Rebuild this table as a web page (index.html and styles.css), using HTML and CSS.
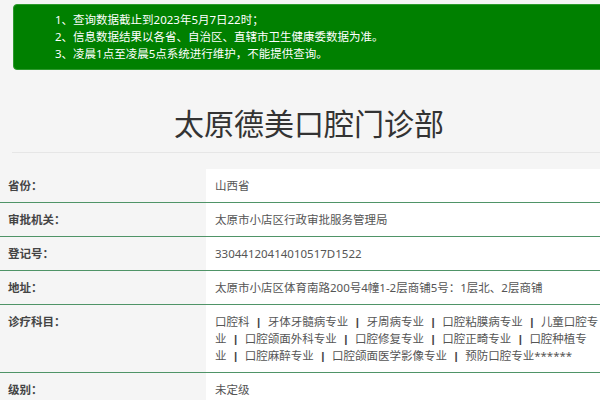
FILE: index.html
```html
<!DOCTYPE html>
<html lang="zh-CN">
<head>
<meta charset="utf-8">
<title>太原德美口腔门诊部</title>
<link rel="stylesheet" href="styles.css">
</head>
<body>
<div class="wrap">
  <div class="notice">
    <div class="notice-line">1、查询数据截止到2023年5月7日22时；</div>
    <div class="notice-line">2、信息数据结果以各省、自治区、直辖市卫生健康委数据为准。</div>
    <div class="notice-line">3、凌晨1点至凌晨5点系统进行维护，不能提供查询。</div>
  </div>
  <h1 class="title">太原德美口腔门诊部</h1>
</div>
<table class="info">
  <tr><th>省份：</th><td>山西省</td></tr>
  <tr><th>审批机关：</th><td>太原市小店区行政审批服务管理局</td></tr>
  <tr><th>登记号：</th><td>33044120414010517D1522</td></tr>
  <tr><th>地址：</th><td>太原市小店区体育南路200号4幢1-2层商铺5号：1层北、2层商铺</td></tr>
  <tr><th>诊疗科目：</th><td>口腔科&#8288;<span class="sep">|</span>&#8288;牙体牙髓病专业&#8288;<span class="sep">|</span>&#8288;牙周病专业&#8288;<span class="sep">|</span>&#8288;口腔粘膜病专业&#8288;<span class="sep">|</span>&#8288;儿童口腔专业&#8288;<span class="sep">|</span>&#8288;口腔颌面外科专业&#8288;<span class="sep">|</span>&#8288;口腔修复专业&#8288;<span class="sep">|</span>&#8288;口腔正畸专业&#8288;<span class="sep">|</span>&#8288;口腔种植专业&#8288;<span class="sep">|</span>&#8288;口腔麻醉专业&#8288;<span class="sep">|</span>&#8288;口腔颌面医学影像专业&#8288;<span class="sep">|</span>&#8288;预防口腔专业******</td></tr>
  <tr><th>级别：</th><td>未定级</td></tr>
</table>
</body>
</html>
```
FILE: styles.css
```css
html, body {
  margin: 0;
  padding: 0;
  overflow: hidden;
}
body {
  background: #f5f5f5;
  font-family: "Noto Sans", "Noto Sans CJK SC", sans-serif;
  font-size: 11.5px;
  color: #555;
}
.wrap {
  margin-left: 12px;
  width: 594px;
  padding-top: 4px;
}
.notice {
  margin-left: 1px;
  background: #008000;
  border: 1px solid #2e9a2e;
  border-radius: 4px;
  color: #fff;
  padding: 6px 0 7px 41px;
  line-height: 17px;
}
.title {
  margin: 0;
  padding: 32px 0 10px;
  text-align: center;
  font-family: "Noto Sans CJK SC", sans-serif;
  font-weight: normal;
  font-size: 30px;
  line-height: 40px;
  color: #333;
  border-bottom: 1px solid #e6e6e6;
}
.info {
  margin-top: 16px;
  width: 600px;
  border-collapse: collapse;
  table-layout: fixed;
}
.info th {
  width: 190px;
  text-align: left;
  vertical-align: top;
  padding: 8px 8px;
  font-weight: bold;
  color: #444;
  line-height: 17px;
  border-bottom: 1px solid #4f9467;
}
.info td {
  background: #fff;
  padding: 8px 0 8px 9px;
  line-height: 17px;
  color: #555;
  border-bottom: 1px solid #4f9467;
}
.sep {
  padding: 0 7.5px;
  font-family: "Liberation Sans", sans-serif;
  font-weight: bold;
  line-height: 10px;
  color: #444;
}
```
